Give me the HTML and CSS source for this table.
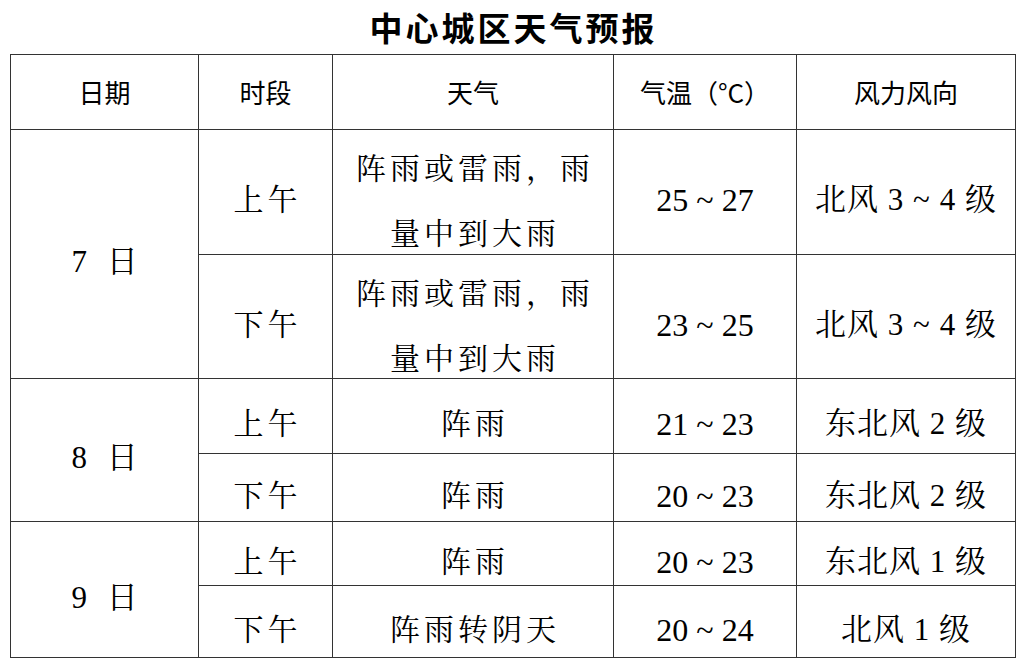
FILE: index.html
```html
<!DOCTYPE html>
<html lang="zh-CN">
<head>
<meta charset="utf-8">
<title>中心城区天气预报</title>
<link rel="stylesheet" href="styles.css">
</head>
<body>
<div class="page">
  <h1 class="title">中心城区天气预报</h1>
  <table class="forecast">
    <colgroup>
      <col class="c-date"><col class="c-period"><col class="c-weather"><col class="c-temp"><col class="c-wind">
    </colgroup>
    <thead>
      <tr class="r-head">
        <th>日期</th><th>时段</th><th>天气</th><th>气温（°C）</th><th>风力风向</th>
      </tr>
    </thead>
    <tbody>
      <tr class="r-1">
        <td class="date" rowspan="2">7 日</td>
        <td class="cjk">上午</td>
        <td class="cjk"><div class="two">阵雨或雷雨，雨<br>量中到大雨</div></td>
        <td class="num">25 ~ 27</td>
        <td class="wind">北风 3 ~ 4 级</td>
      </tr>
      <tr class="r-2">
        <td class="cjk">下午</td>
        <td class="cjk"><div class="two">阵雨或雷雨，雨<br>量中到大雨</div></td>
        <td class="num">23 ~ 25</td>
        <td class="wind">北风 3 ~ 4 级</td>
      </tr>
      <tr class="r-3">
        <td class="date" rowspan="2">8 日</td>
        <td class="cjk">上午</td>
        <td class="cjk">阵雨</td>
        <td class="num">21 ~ 23</td>
        <td class="wind">东北风 2 级</td>
      </tr>
      <tr class="r-4">
        <td class="cjk">下午</td>
        <td class="cjk">阵雨</td>
        <td class="num">20 ~ 23</td>
        <td class="wind">东北风 2 级</td>
      </tr>
      <tr class="r-5">
        <td class="date" rowspan="2">9 日</td>
        <td class="cjk">上午</td>
        <td class="cjk">阵雨</td>
        <td class="num">20 ~ 23</td>
        <td class="wind">东北风 1 级</td>
      </tr>
      <tr class="r-6">
        <td class="cjk">下午</td>
        <td class="cjk">阵雨转阴天</td>
        <td class="num">20 ~ 24</td>
        <td class="wind">北风 1 级</td>
      </tr>
    </tbody>
  </table>
</div>
</body>
</html>
```

FILE: styles.css
```css
html, body {
  margin: 0;
  padding: 0;
  background: #ffffff;
}

.page {
  width: 1024px;
  padding: 0 10px;
  box-sizing: border-box;
}

.title {
  margin: 0;
  height: 54px;
  line-height: 54px;
  text-align: center;
  font-family: "Noto Sans CJK SC", sans-serif;
  font-weight: 700;
  font-size: 33px;
  letter-spacing: 3px;
  padding-left: 3px;
  color: #000;
}

.forecast {
  width: 1005px;
  border-collapse: collapse;
  table-layout: fixed;
  color: #000;
}

.c-date { width: 188px; }
.c-period { width: 134px; }
.c-weather { width: 281px; }
.c-temp { width: 183px; }
.c-wind { width: 219px; }

.forecast th,
.forecast td {
  border: 1px solid #333;
  text-align: center;
  vertical-align: middle;
  padding: 0;
}

.forecast th {
  font-family: "Noto Sans CJK SC", sans-serif;
  font-weight: 400;
  font-size: 26px;
  line-height: 36px;
}

.forecast td {
  font-family: "Liberation Serif", "Noto Serif CJK SC", "Noto Sans CJK SC", serif;
  line-height: 40px;
  padding-top: 16px;
}

.forecast td.cjk {
  font-size: 30px;
  letter-spacing: 4px;
  padding-left: 4px;
}

.forecast td.num {
  font-size: 32px;
}

.forecast td.wind {
  font-size: 31px;
  letter-spacing: 1px;
}

.forecast td.date {
  font-size: 31px;
  letter-spacing: 6px;
  padding-left: 6px;
}

.forecast td .two {
  height: 112px;
  line-height: 65px;
  margin-top: -16px;
}

.r-head { height: 75px; }
.r-1 { height: 125px; }
.r-2 { height: 124px; }
.r-3 { height: 75px; }
.r-4 { height: 68px; }
.r-5 { height: 64px; }
.r-6 { height: 72px; }
```
